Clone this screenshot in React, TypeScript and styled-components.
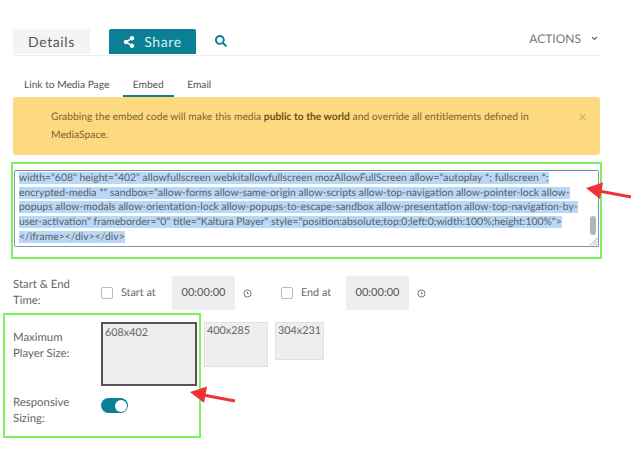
import React from "react";
import styled, { createGlobalStyle } from "styled-components";
import { FaShareAlt, FaSearch } from "react-icons/fa";

const teal = "#0b7f94";
const annotationGreen = "#7cf25c";

const GlobalStyle = createGlobalStyle`
  html, body {
    margin: 0;
    padding: 0;
    background: #fff;
    font-family: Lato, "Open Sans", sans-serif;
    color: #666;
    text-rendering: geometricPrecision;
  }
`;

const Page = styled.div`
  position: relative;
  width: 636px;
  height: 453px;
  overflow: hidden;
  padding: 29px 36px 0 13px;
  box-sizing: border-box;
`;

const TopBar = styled.div`
  display: flex;
  align-items: stretch;
  height: 26px;
  border-bottom: 1px solid #eee;
`;

const MainTab = styled.div<{ $active?: boolean }>`
  display: flex;
  align-items: center;
  justify-content: center;
  gap: 9px;
  height: 25px;
  margin-right: 19px;
  border-radius: 2px 2px 0 0;
  font-size: 14px;
  letter-spacing: 0.6px;
  background: ${(p) => (p.$active ? teal : "#f4f4f4")};
  color: ${(p) => (p.$active ? "#d9eef2" : "#555")};
  width: ${(p) => (p.$active ? "87px" : "77px")};
`;

const SearchButton = styled.div`
  display: flex;
  align-items: center;
  height: 23px;
  color: ${teal};
  font-size: 12px;
`;

const Actions = styled.div`
  display: flex;
  align-items: center;
  margin-left: auto;
  height: 19px;
  gap: 10px;
  padding-right: 2px;
  font-size: 12px;
  color: #777;
`;

const SubTabs = styled.div`
  display: flex;
  gap: 3px;
  height: 41px;
  align-items: flex-end;
  padding-left: 1px;
`;

const SubTab = styled.div<{ $active?: boolean }>`
  padding: 0 10.5px 3px 10px;
  line-height: 14px;
  font-size: 10.2px;
  color: #555;
  white-space: nowrap;
  border-bottom: 2px solid ${(p) => (p.$active ? teal : "transparent")};
`;

const Alert = styled.div`
  position: relative;
  display: flex;
  height: 58px;
  box-sizing: border-box;
  padding: 11px 60px 0 38px;
  border-radius: 3px;
  background: #fdd97f;
  color: #7d6338;
  font-size: 10.3px;
  line-height: 18px;

  b {
    color: #6b4f22;
  }
`;

const CloseMark = styled.span`
  position: absolute;
  top: 11px;
  right: 13px;
  font-size: 15px;
  line-height: 18px;
  color: #c9b27c;
`;

const CodeFrame = styled.div`
  margin: 7px -2px 0;
  padding: 6px 1px 10px 1px;
  border: 2px solid ${annotationGreen};
`;

const CodeBox = styled.div`
  position: relative;
  height: 77px;
  box-sizing: border-box;
  padding: 0 4px;
  border: 1px solid #7f97ad;
  border-top-color: #6f8aa6;
  border-radius: 2px;
  background: #fff;
  font-size: 10.4px;
  line-height: 14.7px;
  color: #5a5f66;
`;

const CodeLine = styled.div`
  white-space: nowrap;

  span {
    background: #b9d7f7;
  }
`;

const ScrollThumb = styled.div`
  position: absolute;
  right: 2px;
  top: 45px;
  width: 6px;
  height: 19px;
  border-radius: 3px;
  background: #b5b5b5;
`;

const ResizeGrip = styled.svg`
  position: absolute;
  right: 0;
  bottom: 0;
  width: 9px;
  height: 9px;
`;

const FormRow = styled.div`
  display: flex;
`;

const TimeRow = styled(FormRow)`
  margin-top: 17px;
  height: 34px;
  align-items: center;
`;

const Label = styled.div`
  width: 88px;
  flex: none;
  font-size: 11.4px;
  line-height: 16px;
  color: #666;
`;

const Check = styled.span`
  width: 10px;
  height: 10px;
  flex: none;
  border: 1px solid #bbb;
  border-radius: 2px;
  background: #fff;
`;

const TimeLabel = styled.span<{ $width: string }>`
  width: ${(p) => p.$width};
  flex: none;
  margin-left: 8px;
  padding-bottom: 2px;
  font-size: 10.8px;
  color: #666;
`;

const TimeValue = styled.div`
  width: 63px;
  height: 34px;
  flex: none;
  display: flex;
  align-items: center;
  justify-content: center;
  box-sizing: border-box;
  padding-bottom: 1px;
  border-radius: 2px;
  background: #eee;
  font-size: 11px;
  color: #555;
`;

const ClockIcon = styled.svg<{ $gap: string }>`
  width: 9px;
  height: 9px;
  flex: none;
  margin-left: 8px;
  margin-right: ${(p) => p.$gap};
`;

const SizeFrame = styled.div`
  margin: 3px 0 0 -10px;
  width: 198px;
  height: 125px;
  box-sizing: border-box;
  padding: 7px 0 0 8px;
  border: 2px solid ${annotationGreen};
`;

const SizeLabel = styled(Label)`
  margin-top: 8px;
`;

const SizeRow = styled(FormRow)`
  height: 67px;
`;

const SizeOptions = styled.div`
  display: flex;
  align-items: flex-start;
  gap: 7px;
`;

const SizeOption = styled.div<{ $width: number; $height: number; $selected?: boolean }>`
  width: ${(p) => p.$width}px;
  height: ${(p) => p.$height}px;
  flex: none;
  box-sizing: border-box;
  padding: ${(p) => (p.$selected ? "2px 2px" : "1px 2px")};
  background: #eee;
  border: ${(p) => (p.$selected ? "2px solid #555" : "1px solid #e0e0e0")};
  font-size: 10.8px;
  line-height: 14px;
  color: #666;
`;

const ToggleRow = styled(FormRow)`
  margin-top: 6px;
`;

const Toggle = styled.div`
  width: 27px;
  height: 15px;
  margin-top: 3px;
  display: flex;
  justify-content: flex-end;
  align-items: center;
  padding-right: 1px;
  box-sizing: border-box;
  border-radius: 8px;
  background: ${teal};

  &::after {
    content: "";
    width: 12px;
    height: 12px;
    border-radius: 50%;
    background: #fff;
  }
`;

const Arrow = styled.svg<{ $left: number; $top: number }>`
  position: absolute;
  left: ${(p) => p.$left}px;
  top: ${(p) => p.$top}px;
  width: 50px;
  height: 26px;
`;

const Clock = ({ gap }: { gap: string }) => (
  <ClockIcon $gap={gap} viewBox="0 0 10 10" fill="none" stroke="#666" strokeWidth="1">
    <circle cx="5" cy="5" r="4" />
    <path d="M5 3v2.2h1.4" />
  </ClockIcon>
);

const RedArrow = ({ left, top }: { left: number; top: number }) => (
  <Arrow $left={left} $top={top} viewBox="0 0 50 26">
    <path d="M15 11 L47 17" stroke="#ee3338" strokeWidth="3" />
    <path d="M2 8 L19 2.5 L16 19 Z" fill="#ee3338" />
  </Arrow>
);

const codeLines = [
  'width="608" height="402" allowfullscreen webkitallowfullscreen mozAllowFullScreen allow="autoplay *; fullscreen *;',
  'encrypted-media *" sandbox="allow-forms allow-same-origin allow-scripts allow-top-navigation allow-pointer-lock allow-',
  "popups allow-modals allow-orientation-lock allow-popups-to-escape-sandbox allow-presentation allow-top-navigation-by-",
  'user-activation" frameborder="0" title="Kaltura Player" style="position:absolute;top:0;left:0;width:100%;height:100%">',
  "</iframe></div></div>",
];

export default function App() {
  return (
    <Page>
      <GlobalStyle />
      <TopBar>
        <MainTab>Details</MainTab>
        <MainTab $active>
          <FaShareAlt size={12} color="#fff" />
          Share
        </MainTab>
        <SearchButton>
          <FaSearch />
        </SearchButton>
        <Actions>
          ACTIONS
          <svg width="7" height="5" viewBox="0 0 7 5" fill="none" stroke="#666" strokeWidth="1.2">
            <path d="M1 1l2.5 2.5L6 1" />
          </svg>
        </Actions>
      </TopBar>

      <SubTabs>
        <SubTab>Link to Media Page</SubTab>
        <SubTab $active>Embed</SubTab>
        <SubTab>Email</SubTab>
      </SubTabs>

      <Alert>
        <div>
          Grabbing the embed code will make this media <b>public to the world</b> and override all
          entitlements defined in MediaSpace.
        </div>
        <CloseMark>×</CloseMark>
      </Alert>

      <CodeFrame>
        <CodeBox>
          {codeLines.map((line) => (
            <CodeLine key={line}>
              <span>{line}</span>
            </CodeLine>
          ))}
          <ScrollThumb />
          <ResizeGrip viewBox="0 0 9 9" stroke="#888" strokeWidth="0.8">
            <path d="M1 8.5L8.5 1M4 8.5L8.5 4M7 8.5L8.5 7" />
          </ResizeGrip>
        </CodeBox>
      </CodeFrame>

      <TimeRow>
        <Label>
          Start &amp; End
          <br />
          Time:
        </Label>
        <Check />
        <TimeLabel $width="51px">Start at</TimeLabel>
        <TimeValue>00:00:00</TimeValue>
        <Clock gap="29px" />
        <Check />
        <TimeLabel $width="45px">End at</TimeLabel>
        <TimeValue>00:00:00</TimeValue>
        <Clock gap="0" />
      </TimeRow>

      <SizeFrame>
        <SizeRow>
          <SizeLabel>
            Maximum
            <br />
            Player Size:
          </SizeLabel>
          <SizeOptions>
            <SizeOption $width={96} $height={64} $selected>
              608x402
            </SizeOption>
            <SizeOption $width={64} $height={45}>
              400x285
            </SizeOption>
            <SizeOption $width={49} $height={38}>
              304x231
            </SizeOption>
          </SizeOptions>
        </SizeRow>
        <ToggleRow>
          <Label>
            Responsive
            <br />
            Sizing:
          </Label>
          <Toggle />
        </ToggleRow>
      </SizeFrame>

      <RedArrow left={584} top={180} />
      <RedArrow left={188} top={384} />
    </Page>
  );
}
